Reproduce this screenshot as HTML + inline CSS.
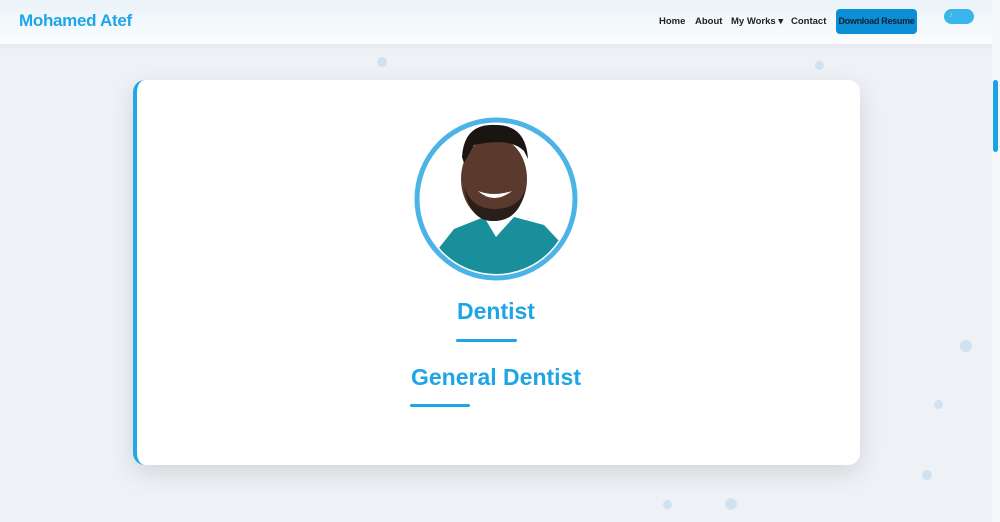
<!DOCTYPE html>
<html><head><style>
*{margin:0;padding:0;box-sizing:border-box}
body{width:1000px;height:522px;overflow:hidden;background:#eef2f6;font-family:"Liberation Sans",sans-serif;position:relative}
.nav{position:absolute;left:0;top:0;width:992px;height:44px;background:linear-gradient(180deg,#eaf3f9,#fbfdfe);box-shadow:0 2px 6px rgba(0,0,0,.05)}
.logo{position:absolute;left:19px;top:11px;font-size:17px;font-weight:bold;color:#1ea6e8;letter-spacing:-.3px}
.links{position:absolute;top:16px;font-size:9.5px;font-weight:bold;color:#222}
.btn{position:absolute;left:836px;top:9px;width:81px;height:25px;background:#0a8fd6;border-radius:4px;font-size:9px;font-weight:bold;color:#123;line-height:25px;text-align:center;letter-spacing:-.3px}
.tog{position:absolute;left:944px;top:9px;width:30px;height:15px;background:#39b5ee;border-radius:8px}
.card{position:absolute;left:133px;top:80px;width:727px;height:385px;background:#fff;border-radius:12px;border-left:4px solid #22a8e6;box-shadow:0 8px 24px rgba(0,0,0,.12)}
.t{position:absolute;color:#1fa5e6;font-weight:bold;text-align:center}
.ul{position:absolute;height:3px;background:#1fa5e6;border-radius:2px}
.sb{position:absolute;left:992px;top:0;width:8px;height:522px;background:#f4f6f8}
.th{position:absolute;left:993px;top:80px;width:5px;height:72px;background:#1aa3e4;border-radius:3px}
.d{position:absolute;border-radius:50%;background:#cfe2f0}
</style></head><body>
<div class="d" style="left:377px;top:57px;width:10px;height:10px"></div>
<div class="d" style="left:815px;top:61px;width:9px;height:9px"></div>
<div class="d" style="left:960px;top:340px;width:12px;height:12px"></div>
<div class="d" style="left:934px;top:400px;width:9px;height:9px"></div>
<div class="d" style="left:922px;top:470px;width:10px;height:10px"></div>
<div class="d" style="left:725px;top:498px;width:12px;height:12px"></div>
<div class="d" style="left:663px;top:500px;width:9px;height:9px"></div>
<div class="nav">
<div class="logo">Mohamed Atef</div>
<div class="links" style="left:659px">Home</div>
<div class="links" style="left:695px">About</div>
<div class="links" style="left:731px">My Works ▾</div>
<div class="links" style="left:791px">Contact</div>
<div class="btn">Download Resume</div>
<div class="tog"><span style="position:absolute;left:5px;top:1px;font-size:8px;color:#fc3">♪</span></div>
</div>
<div class="card"></div>
<svg style="position:absolute;left:414px;top:117px" width="164" height="164" viewBox="0 0 164 164">
<defs><clipPath id="c"><circle cx="82" cy="82" r="75"/></clipPath></defs>
<circle cx="82" cy="82" r="79" fill="#fff" stroke="#4cb3e6" stroke-width="5"/>
<g clip-path="url(#c)">
<rect width="164" height="164" fill="#fff"/>
<path d="M10 150 L40 112 L70 100 L82 120 L100 100 L130 108 L160 140 L160 170 L10 170Z" fill="#1a8f9c"/>
<ellipse cx="80" cy="62" rx="33" ry="42" fill="#5a3a2c"/>
<path d="M48 40 Q50 6 82 8 Q112 8 114 42 L110 34 Q96 20 60 28 L50 46Z" fill="#1a1412"/>
<path d="M50 70 Q56 105 80 104 Q106 104 112 70 Q106 92 80 92 Q58 92 50 70Z" fill="#2a1e18"/>
<path d="M64 74 Q80 88 98 74 Q80 80 64 74Z" fill="#fff"/>
</g>
</svg>
<div class="t" style="left:396px;top:298px;width:200px;font-size:23px">Dentist</div>
<div class="ul" style="left:456px;top:339px;width:61px"></div>
<div class="t" style="left:396px;top:364px;width:200px;font-size:23px">General Dentist</div>
<div class="ul" style="left:410px;top:404px;width:60px"></div>
<div class="sb"></div><div class="th"></div>
</body></html>
